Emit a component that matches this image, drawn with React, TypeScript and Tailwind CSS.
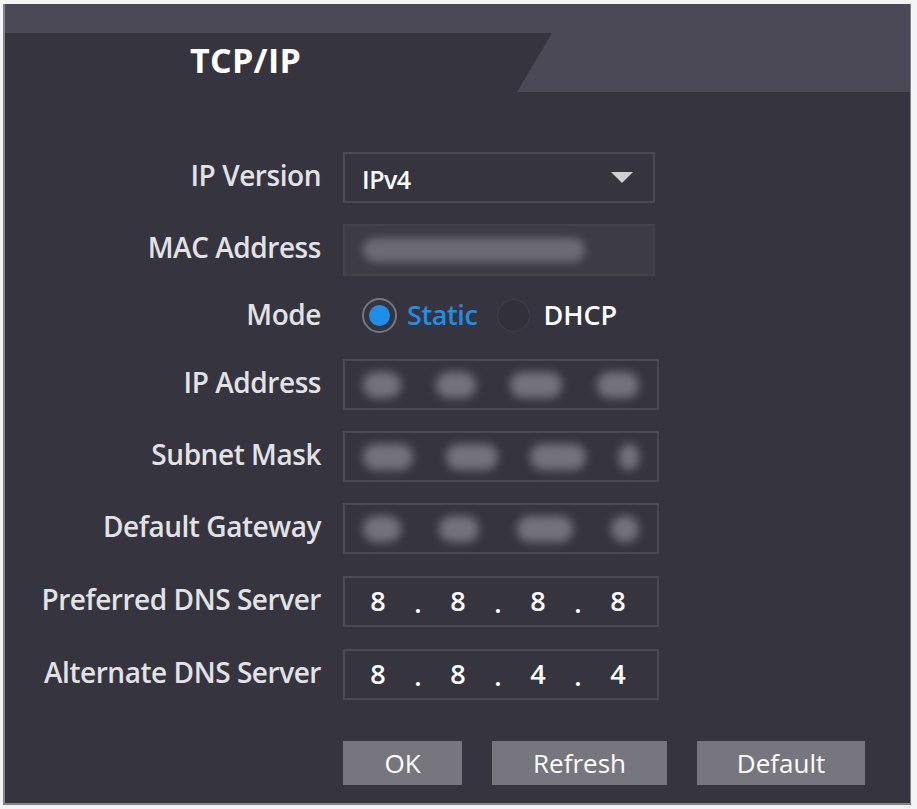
import React from "react";

const font = { fontFamily: '"Open Sans", "Noto Sans", Arial, sans-serif' };

type Blob = { cls: string };

const ipBlobs: Blob[] = [
  { cls: "w-[38px]" },
  { cls: "w-[40px]" },
  { cls: "w-[52px]" },
  { cls: "w-[42px]" },
];
const maskBlobs: Blob[] = [
  { cls: "w-[50px]" },
  { cls: "w-[52px]" },
  { cls: "w-[56px]" },
  { cls: "w-[20px]" },
];
const gwBlobs: Blob[] = [
  { cls: "w-[38px]" },
  { cls: "w-[40px]" },
  { cls: "w-[56px]" },
  { cls: "w-[28px]" },
];

function Label({ children }: { children: React.ReactNode }) {
  return (
    <div className="w-[317px] pr-[1px] pb-[6px] text-right text-[28px] font-semibold leading-none text-[#e2e2e7] tracking-[-0.45px]">
      {children}
    </div>
  );
}

function MaskedField({ blobs }: { blobs: Blob[] }) {
  return (
    <div className="w-[316px] h-[51px] border-2 border-[#4a4955] flex items-center justify-between px-[18px]">
      {blobs.map((b, i) => (
        <span
          key={i}
          className={`${b.cls} h-[26px] rounded-full bg-[#74737d] blur-[5px]`}
        />
      ))}
    </div>
  );
}

function DnsField({ parts }: { parts: string[] }) {
  return (
    <div className="w-[316px] h-[51px] border-2 border-[#4a4955] flex items-center pl-[13px] text-[27px] font-semibold text-white">
      {parts.map((p, i) => (
        <React.Fragment key={i}>
          {i > 0 && <span className="w-[40px] text-center pt-[4px]">.</span>}
          <span className="w-[40px] text-center">{p}</span>
        </React.Fragment>
      ))}
    </div>
  );
}

function Row({
  label,
  children,
  h = "h-[51px]",
}: {
  label: string;
  children: React.ReactNode;
  h?: string;
}) {
  return (
    <div className={`flex items-center gap-[21px] ${h}`}>
      <Label>{label}</Label>
      {children}
    </div>
  );
}

export default function App() {
  return (
    <div className="w-[917px] h-[809px] bg-[#f4f4f6] pt-[4px] pl-[3px]" style={font}>
      <div className="w-[908px] h-[801px] bg-[#35343f] border-l-2 border-r border-b-2 border-[#85848b] flex flex-col">
        {/* header strip with the slanted tab */}
        <div className="h-[88px] bg-[#4a4955] pt-[29px]">
          <div className="h-[59px] w-[547px] bg-[#35343f] [clip-path:polygon(0_0,100%_0,calc(100%-35px)_100%,0_100%)] pl-[185px] pt-[2px]">
            <span className="text-[34px] font-bold text-white tracking-[0.3px]">TCP/IP</span>
          </div>
        </div>

        {/* form */}
        <div className="flex flex-col pt-[60px]">
          <Row label="IP Version">
            <div className="w-[312px] h-[51px] border-2 border-[#4a4955] flex items-center justify-between pl-[17px] pr-[20px]">
              <span className="text-[25px] font-semibold text-white pt-[5px] tracking-[-0.5px]">IPv4</span>
              <svg width="22" height="11" viewBox="0 0 22 11">
                <polygon points="0,0 22,0 11,11" fill="#cfcfd4" />
              </svg>
            </div>
          </Row>

          <div className="h-[21px]" />
          <Row label="MAC Address">
            <div className="w-[312px] h-[52px] border-2 border-[#43424b] bg-[#3d3c44] flex items-center pl-[18px]">
              <span className="w-[222px] h-[24px] rounded-full bg-[#6c6b73] blur-[4px]" />
            </div>
          </Row>

          <div className="h-[22px]" />
          <Row label="Mode" h="h-[40px]">
            <div className="flex items-center pl-[19px] pb-[4px] text-[27px] font-semibold tracking-[-0.4px]">
              <span className="w-[35px] h-[35px] rounded-full border-2 border-[#77767f] flex items-center justify-center">
                <span className="w-[21px] h-[21px] rounded-full bg-[#1e8fe8]" />
              </span>
              <span className="ml-[10px] text-[#1e8fe8]">Static</span>
              <span className="ml-[20px] w-[33px] h-[33px] rounded-full border border-[#42414b] bg-[#32313b]" />
              <span className="ml-[13px] text-white tracking-[0px]">DHCP</span>
            </div>
          </Row>

          <div className="h-[22px]" />
          <Row label="IP Address">
            <MaskedField blobs={ipBlobs} />
          </Row>
          <div className="h-[21px]" />
          <Row label="Subnet Mask">
            <MaskedField blobs={maskBlobs} />
          </Row>
          <div className="h-[21px]" />
          <Row label="Default Gateway">
            <MaskedField blobs={gwBlobs} />
          </Row>
          <div className="h-[22px]" />
          <Row label="Preferred DNS Server">
            <DnsField parts={["8", "8", "8", "8"]} />
          </Row>
          <div className="h-[22px]" />
          <Row label="Alternate DNS Server">
            <DnsField parts={["8", "8", "4", "4"]} />
          </Row>

          {/* actions */}
          <div className="flex gap-[30px] pl-[338px] pt-[41px] text-[26px] text-white">
            <button className="w-[119px] h-[44px] bg-[#77767f]">OK</button>
            <button className="w-[175px] h-[44px] bg-[#77767f]">Refresh</button>
            <button className="w-[168px] h-[44px] bg-[#77767f]">Default</button>
          </div>
        </div>
      </div>
    </div>
  );
}
